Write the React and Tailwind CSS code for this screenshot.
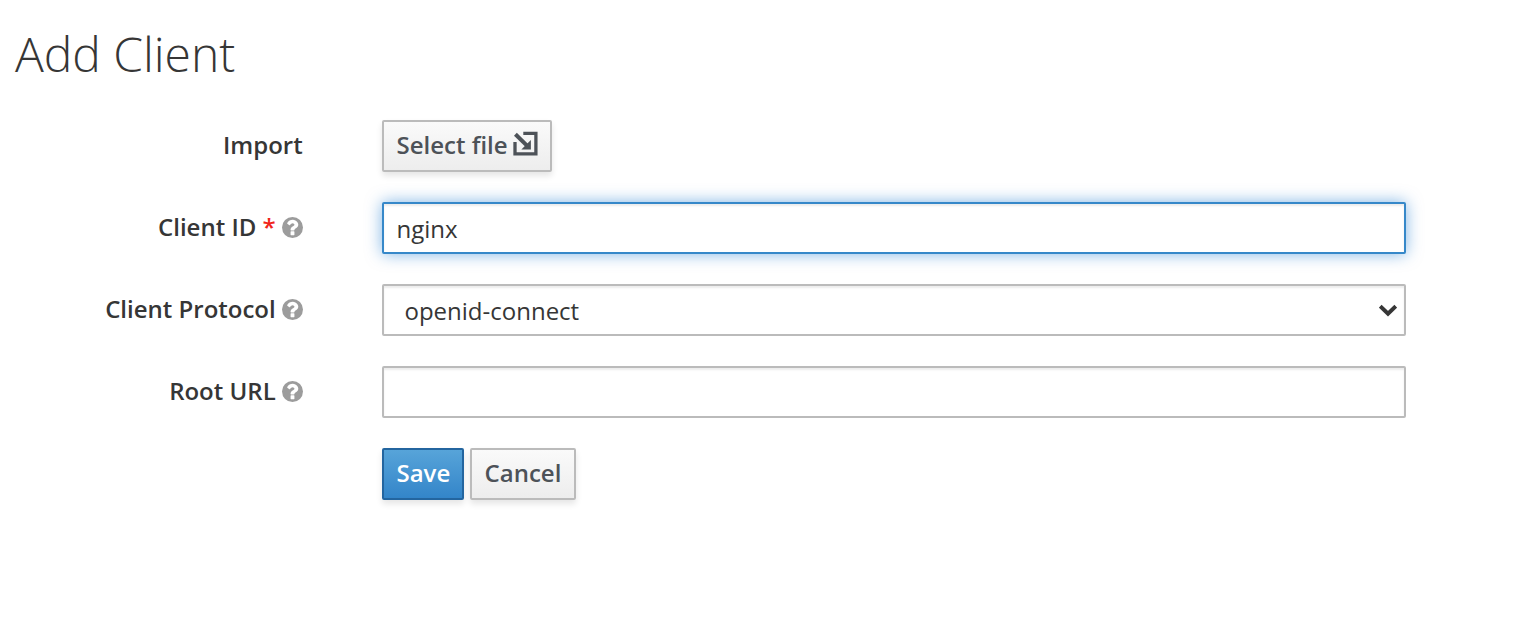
const CONTROL =
  "h-[52px] w-full rounded-[2px] border-2 bg-white text-2xl text-[#363636] outline-none";
const BUTTON =
  "flex h-[52px] items-center rounded-[2px] border-2 pl-[12.5px] pb-[2px] text-2xl font-semibold whitespace-nowrap shadow-[0_4px_6px_rgba(3,3,3,0.1)]";

function HelpIcon() {
  return (
    <svg viewBox="128 128 1536 1536" className="mb-[2px] ml-[6px] h-[21px] w-[21px] shrink-0" aria-hidden="true">
      <circle cx="896" cy="896" r="768" fill="#9c9c9c" />
      <path
        transform="translate(896 896) scale(1.1) translate(-896 -896)"
        fill="#fff"
        d="M1024 1376v-192q0-14-9-23t-23-9h-192q-14 0-23 9t-9 23v192q0 14 9 23t23 9h192q14 0 23-9t9-23zm256-672q0-88-55.5-163t-138.5-116-170-41q-243 0-371 213-15 24 8 42l132 100q7 6 19 6 16 0 25-12 53-68 86-92 34-24 86-24 48 0 85.5 26t37.5 59q0 38-20 61t-68 45q-63 28-115.5 86.5t-52.5 125.5v36q0 14 9 23t23 9h192q14 0 23-9t9-23q0-19 21.5-49.5t54.5-49.5q32-18 49-28.5t46-35 44.5-48 28-60.5 12.5-81z"
      />
    </svg>
  );
}

function ImportIcon() {
  return (
    <svg viewBox="0 0 25 25" className="mb-[3px] ml-[5.4px] h-[25px] w-[25px] shrink-0" fill="none" stroke="currentColor" strokeWidth="3.3" aria-hidden="true">
      <path d="M10.3 2.3H22.9V22.9H2V11" />
      <path d="M2.4 3.2L14 14.6" strokeWidth="4" />
      <path d="M17.9 9V18.6H8.4Z" fill="currentColor" stroke="none" />
    </svg>
  );
}

function Row({ label, required, help, children }) {
  return (
    <div className="flex h-[52px] items-center">
      <label className="flex w-[302.7px] shrink-0 items-center justify-end text-2xl font-semibold whitespace-nowrap text-[#363636]">
        <span className="pb-[2px]">
          {label}
          {required && <span className="text-[#f0251a]"> *</span>}
        </span>
        {help && <HelpIcon />}
      </label>
      <div className="ml-[79.3px] w-[1024px]">{children}</div>
    </div>
  );
}

export default function App() {
  return (
    <main className="h-[620px] w-full bg-white font-['Open_Sans',sans-serif]">
      <h1 className="h-[120px] pt-[27px] pl-[15px] text-5xl leading-[53px] font-light tracking-[-0.05px] text-[#363636]">Add Client</h1>
      <form className="flex flex-col gap-[30px]" onSubmit={(e) => e.preventDefault()}>
        <Row label="Import">
          <button type="button" className={`${BUTTON} w-[170px] border-[#bbb] bg-linear-to-b from-[#fafafa] to-[#ededed] text-[#4d5258]`}>
            Select file
            <ImportIcon />
          </button>
        </Row>
        <Row label="Client ID" required help>
          <input
            defaultValue="nginx"
            className={`${CONTROL} block border-[#3688c9] px-[12.5px] shadow-[inset_0_2px_2px_rgba(3,3,3,0.075),0_0_16px_rgba(0,108,203,0.5)]`}
          />
        </Row>
        <Row label="Client Protocol" help>
          <div className={`${CONTROL} flex items-center justify-between border-[#bbb] pr-[7px] pl-[20.5px] shadow-[inset_0_2px_2px_rgba(3,3,3,0.075)]`}>
            <span className="pt-[1px]">openid-connect</span>
            <svg viewBox="0 0 18 13" className="h-[13px] w-[18px]" fill="none" stroke="#363636" strokeWidth="4" aria-hidden="true">
              <path d="M1.2 2.2L9 9.8L16.8 2.2" />
            </svg>
          </div>
        </Row>
        <Row label="Root URL" help>
          <input className={`${CONTROL} block border-[#bbb] px-[13px] shadow-[inset_0_2px_2px_rgba(3,3,3,0.075)]`} />
        </Row>
        <div className="flex gap-[6px] pl-[382px]">
          <button type="submit" className={`${BUTTON} w-[82px] border-[#23659f] bg-linear-to-b from-[#57a4d9] to-[#3385c9] text-white`}>
            Save
          </button>
          <button type="button" className={`${BUTTON} w-[106px] border-[#bbb] bg-linear-to-b from-[#fafafa] to-[#ededed] text-[#4d5258]`}>
            Cancel
          </button>
        </div>
      </form>
    </main>
  );
}
